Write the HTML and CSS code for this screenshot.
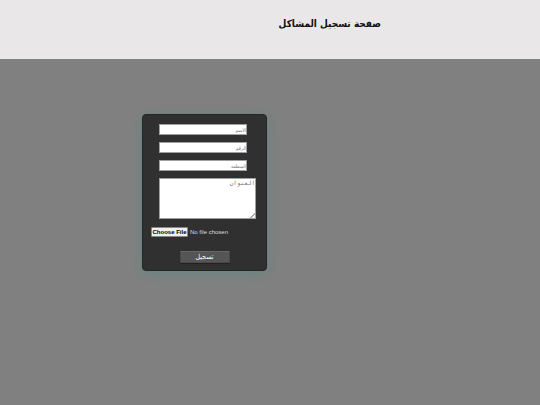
FILE: index.html
```html
<!DOCTYPE html>
<html lang="ar">
<head>
<meta charset="utf-8">
<meta name="viewport" content="width=device-width, initial-scale=1">
<title>صفحة تسجيل المشاكل</title>
<link rel="stylesheet" href="styles.css">
</head>
<body>
<header class="header">
<h1 class="title" dir="rtl">صفحة تسجيل المشاكل</h1>
</header>
<main class="main">
<form class="card">
<input class="field" type="text" aria-label="الاسم" placeholder="الاسم">
<input class="field" type="text" aria-label="الرقم" placeholder="الرقم">
<input class="field" type="text" aria-label="المنطقة" placeholder="المنطقة">
<textarea class="field address" aria-label="العنوان" placeholder="العنوان"></textarea>
<input class="file" type="file" lang="en" aria-label="Choose File">
<button class="submit" type="submit">تسجيل</button>
</form>
</main>
</body>
</html>
```

FILE: styles.css
```css
* {
  box-sizing: border-box;
}

body {
  margin: 0;
  min-height: 100vh;
  background: #808080;
  font-family: "Liberation Sans", "DejaVu Sans", sans-serif;
}

.header {
  padding: 16px 159px 27px 16px;
  background: #e9e7e8;
}

.title {
  margin: 0;
  font-family: "DejaVu Sans Condensed", "DejaVu Sans", sans-serif;
  font-size: 10px;
  line-height: 16px;
  text-align: right;
  color: #111;
}

.main {
  padding: 55px 16px 16px 142px;
}

.card {
  display: flex;
  flex-direction: column;
  align-items: flex-start;
  gap: 7px;
  width: 125px;
  padding: 9px 8px 7px;
  border: 1px solid #242626;
  border-radius: 4px;
  background: #303030;
  box-shadow: 0 3px 12px #66857e;
}

.field {
  width: 88px;
  height: 11px;
  margin: 0 0 0 8px;
  padding: 0;
  border: 1px solid #a0a0a0;
  border-radius: 0;
  background: #fff;
  font-family: "DejaVu Sans Condensed", "DejaVu Sans", sans-serif;
  font-size: 5px;
  line-height: 8px;
  text-align: right;
}

.field::placeholder {
  color: #777;
}

.address {
  width: 97px;
  height: 41px;
  font-family: "DejaVu Sans Mono", monospace;
  font-size: 6px;
  resize: both;
}

.address::-webkit-resizer {
  background: linear-gradient(135deg, #fff 82%, #aaa 82%, #aaa 87%, #fff 87%);
}

.file {
  width: 100px;
  height: 10px;
  margin-top: 1px;
  font-family: "Liberation Sans", sans-serif;
  font-size: 6px;
  line-height: 10px;
  color: #ddd;
}

.file::file-selector-button {
  width: 37px;
  height: 10px;
  margin: 0 2px 0 0;
  padding: 0;
  border: 1px solid #888;
  border-radius: 1px;
  background: #efefef;
  color: #000;
  font: bold 6px/8px "Liberation Sans", sans-serif;
}

.submit {
  align-self: center;
  width: 50px;
  height: 12px;
  margin-top: 7px;
  padding: 0;
  border: 1px solid #484848;
  border-top-color: #666;
  border-radius: 1px;
  background: #555;
  box-shadow: 0 1px 1px #222;
  font-family: "DejaVu Sans Condensed", "DejaVu Sans", sans-serif;
  font-size: 7px;
  line-height: 8px;
  color: #fff;
}
```
